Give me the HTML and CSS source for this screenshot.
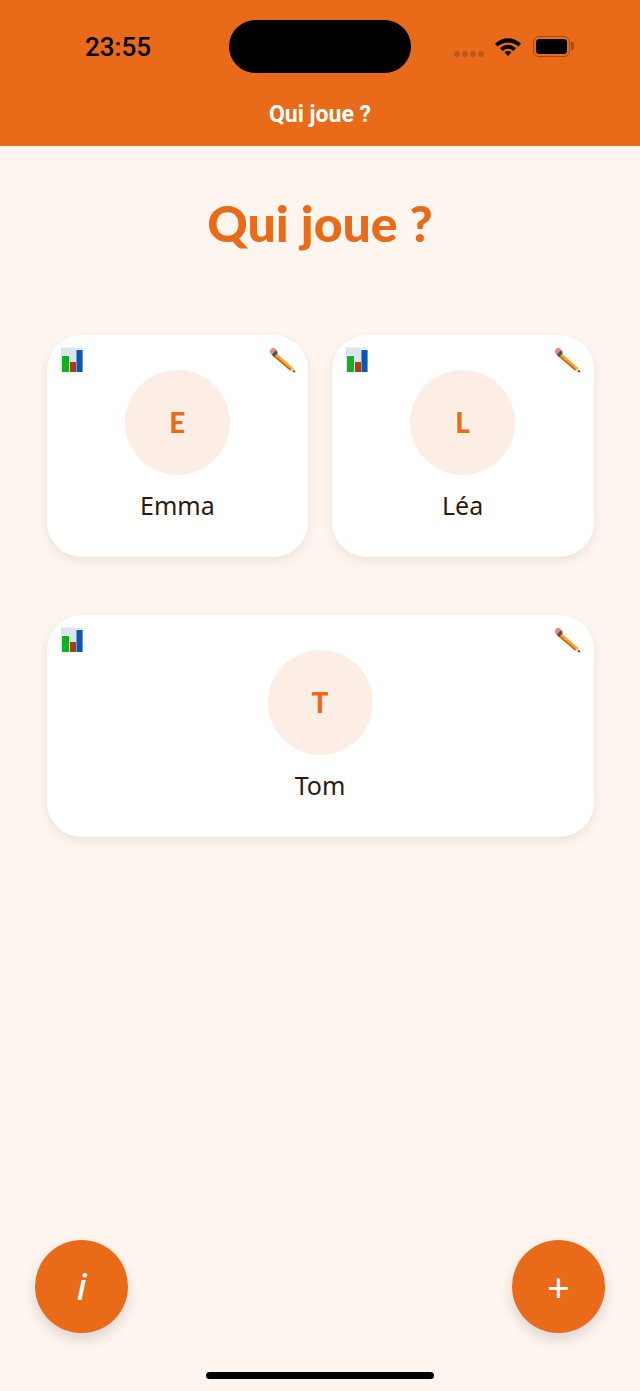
FILE: index.html
```html
<!DOCTYPE html>
<html lang="fr">
<head>
	<meta charset="UTF-8">
	<title>Qui joue ?</title>
	<link rel="stylesheet" href="styles.css">
</head>
<body>
	<svg class="defs" width="0" height="0">
		<symbol id="chart" viewBox="0 0 22 25">
			<rect x="0" y="0" width="22" height="25" fill="#dde3ea"/>
			<rect x="0" y="0" width="22" height="1" fill="#f1f3f5"/>
			<rect x="1" y="9" width="7" height="16" fill="#0fb024"/>
			<rect x="1" y="8" width="7" height="1" fill="#fff"/>
			<rect x="9" y="15" width="6" height="10" fill="#a83f17"/>
			<rect x="15.500" y="3" width="6" height="22" fill="#0c56b4"/>
			<rect x="15.500" y="2" width="6" height="1" fill="#fff"/>
		</symbol>
		<symbol id="pencil" viewBox="0 0 27 26">
			<path d="M7 6 L24 21 L26.500 25.500 L21 23.500 L4 9 Z" fill="#f28a12"/>
			<path d="M7 6 L24 21 L22.500 22.500 L5.500 7.500 Z" fill="#f7a83a"/>
			<path d="M4 9 L21 23.500 L22 22.500 L5 8 Z" fill="#c9660d"/>
			<path d="M24 21 L26.500 25.500 L21 23.500 Z" fill="#f5d6a0"/>
			<path d="M25 23 L26.500 25.500 L23.700 24.600 Z" fill="#222"/>
			<path d="M2 2 Q4 0 6 1.500 L9 4.500 L4.500 9.500 L1.500 6.500 Q0 4 2 2 Z" fill="#e58a86"/>
			<path d="M6.500 3.500 L9 6 L5 10 L2.800 7.800 Z" fill="#55504c"/>
		</symbol>
	</svg>

	<header class="topbar">
		<div class="statusbar">
			<span class="clock">23:55</span>
			<div class="island"></div>
			<div class="status-icons">
				<div class="signal"><i></i><i></i><i></i><i></i></div>
				<svg class="wifi" width="28" height="20" viewBox="0 0 28 20">
					<path d="M1 7.500 Q14 -3 27 7.500 L24.500 10.500 Q14 2.500 3.500 10.500 Z" fill="#000"/>
					<path d="M6 12 Q14 5.500 22 12 L19.500 15 Q14 10.500 8.500 15 Z" fill="#000"/>
					<path d="M10.500 16.300 Q14 13.800 17.500 16.300 L14 20 Z" fill="#000"/>
				</svg>
				<div class="battery"><div class="battery-level"></div></div>
				<div class="battery-cap"></div>
			</div>
		</div>
		<div class="topbar-title">Qui joue ?</div>
	</header>

	<main class="content">
		<h1 class="page-title">Qui joue ?</h1>
		<div class="players">
			<div class="player">
				<div class="player-actions">
					<svg class="icon-chart"><use href="#chart"/></svg>
					<svg class="icon-pencil"><use href="#pencil"/></svg>
				</div>
				<div class="avatar">E</div>
				<div class="player-name">Emma</div>
			</div>
			<div class="player">
				<div class="player-actions">
					<svg class="icon-chart"><use href="#chart"/></svg>
					<svg class="icon-pencil"><use href="#pencil"/></svg>
				</div>
				<div class="avatar">L</div>
				<div class="player-name">Léa</div>
			</div>
			<div class="player wide">
				<div class="player-actions">
					<svg class="icon-chart"><use href="#chart"/></svg>
					<svg class="icon-pencil"><use href="#pencil"/></svg>
				</div>
				<div class="avatar">T</div>
				<div class="player-name">Tom</div>
			</div>
		</div>
	</main>

	<footer class="bottom">
		<div class="fabs">
			<div class="fab fab-info">i</div>
			<div class="fab fab-add">+</div>
		</div>
		<div class="home-bar"></div>
	</footer>
</body>
</html>
```

FILE: styles.css
```css
body {
	margin: 0;
	height: 100vh;
	display: flex;
	flex-direction: column;
	background-color: #fef5ef;
	font-family: "Open Sans", sans-serif;
	overflow: hidden;
}
.defs {
	display: none;
}

/* top bar */
.topbar {
	height: 146px;
	background-color: #e96b1a;
	flex: none;
}
.statusbar {
	height: 53px;
	padding: 20px 0 0 85px;
	display: flex;
	position: relative;
}
.clock {
	width: 144px;
	font-family: Roboto, sans-serif;
	font-size: 26px;
	font-weight: 500;
	line-height: 55px;
	color: #000;
}
.island {
	width: 182px;
	height: 53px;
	border-radius: 27px;
	background-color: #000;
}
.status-icons {
	margin-left: 43px;
	display: flex;
	align-items: flex-start;
}
.signal {
	display: flex;
	gap: 2.500px;
	margin: 31px 10px 0 0;
}
.signal i {
	width: 5.500px;
	height: 5.500px;
	border-radius: 50%;
	background-color: #b9591c;
}
.wifi {
	margin: 16px 11px 0 0;
}
.battery {
	box-sizing: border-box;
	width: 37px;
	height: 21px;
	margin-top: 16px;
	padding: 2px;
	border: 1.500px solid #a54a12;
	border-radius: 6px;
}
.battery-level {
	height: 100%;
	border-radius: 3.500px;
	background-color: #000;
}
.battery-cap {
	width: 3px;
	height: 8px;
	margin: 22px 0 0 1px;
	border-radius: 0 2px 2px 0;
	background-color: #a54a12;
}
.topbar-title {
	margin-top: 27px;
	text-align: center;
	font-family: Roboto, sans-serif;
	font-size: 23px;
	font-weight: 700;
	line-height: 30px;
	color: #fff;
}

/* players */
.content {
	flex: 1;
	padding: 0 46.500px;
}
.page-title {
	margin: 46px 0 80px;
	text-align: center;
	font-family: Lato, sans-serif;
	font-size: 50px;
	font-weight: 900;
	line-height: 63px;
	color: #e96b1a;
}
.players {
	display: grid;
	grid-template-columns: 1fr 1fr;
	column-gap: 23.500px;
	row-gap: 58px;
}
.player {
	height: 222px;
	padding-top: 12px;
	box-sizing: border-box;
	border-radius: 35px;
	background-color: #fff;
	box-shadow: 0 4px 12px rgba(0, 0, 0, 0.08);
	display: flex;
	flex-direction: column;
	align-items: center;
}
.wide {
	grid-column: 1 / 3;
}
.player-actions {
	align-self: stretch;
	height: 26px;
	margin-bottom: -3px;
	padding: 0 12.500px 0 14.500px;
	display: flex;
	justify-content: space-between;
}
.icon-chart {
	width: 22px;
	height: 25px;
}
.icon-pencil {
	width: 27px;
	height: 26px;
}
.avatar {
	width: 105px;
	height: 105px;
	border-radius: 50%;
	background-color: #fdeee5;
	font-family: Lato, sans-serif;
	font-size: 28px;
	font-weight: 900;
	line-height: 105px;
	text-align: center;
	color: #e96b1a;
}
.player-name {
	margin-top: 13px;
	font-family: "Noto Sans", sans-serif;
	font-size: 25px;
	line-height: 34px;
	color: #2b1a10;
}

/* bottom buttons */
.bottom {
	flex: none;
}
.fabs {
	padding: 0 35px;
	display: flex;
	justify-content: space-between;
}
.fab {
	width: 93px;
	height: 93px;
	border-radius: 50%;
	background-color: #e96b1a;
	box-shadow: 0 6px 14px rgba(0, 0, 0, 0.14);
	color: #fff;
	text-align: center;
	line-height: 93px;
	font-family: "Noto Sans", sans-serif;
}
.fab-info {
	font-size: 36px;
	font-style: italic;
	font-weight: 500;
}
.fab-add {
	font-size: 40px;
}
.home-bar {
	width: 228px;
	height: 7px;
	margin: 39px auto 12px;
	border-radius: 4px;
	background-color: #000;
}
```
